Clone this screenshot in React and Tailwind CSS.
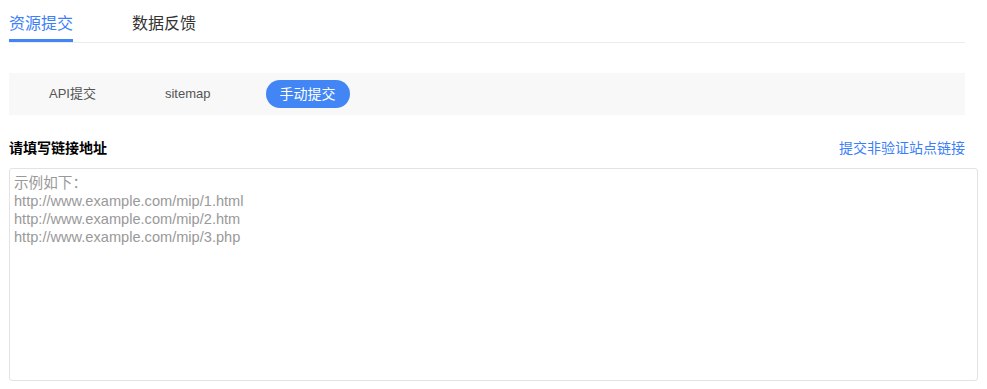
import React, { useState } from 'react';

const FONT = { fontFamily: '"Liberation Sans", "Noto Sans CJK SC", sans-serif' };

const TABS = ['资源提交', '数据反馈'];
const MODES = ['API提交', 'sitemap', '手动提交'];

const PLACEHOLDER = [
  '示例如下：',
  'http://www.example.com/mip/1.html',
  'http://www.example.com/mip/2.htm',
  'http://www.example.com/mip/3.php',
].join('\n');

export default function App() {
  const [tab, setTab] = useState(0);
  const [mode, setMode] = useState(2);

  return (
    <div className="w-[987px] h-[389px] bg-white pl-[9px]" style={FONT}>
      {/* Top tabs */}
      <div className="w-[956px] flex gap-[59px] border-b border-[#ececec]">
        {TABS.map((t, i) => (
          <button
            key={t}
            onClick={() => setTab(i)}
            className={`h-[42px] pt-[8px] text-[16px] leading-[22px] self-start border-b-[3px] ${
              tab === i ? 'text-[#3c7ff7] border-[#4285f4]' : 'text-[#333] border-transparent'
            }`}
          >
            {t}
          </button>
        ))}
      </div>

      {/* Submit mode switch */}
      <div className="mt-[30px] w-[956px] h-[42px] bg-[#f8f8f8] flex items-center pl-[26px] gap-[41px]">
        {MODES.map((m, i) => (
          <button
            key={m}
            onClick={() => setMode(i)}
            className={`h-[28px] px-[14px] rounded-full leading-[28px] ${
              mode === i ? 'bg-[#4285f4] text-white text-[14px]' : 'text-[#555] text-[13px]'
            }`}
          >
            {m}
          </button>
        ))}
      </div>

      {/* Label row */}
      <div className="mt-[24px] w-[956px] flex items-center justify-between h-[18px]">
        <span className="text-[14px] font-bold text-black">请填写链接地址</span>
        <a className="text-[14px] text-[#3c7ff7] cursor-pointer">提交非验证站点链接</a>
      </div>

      <textarea
        className="mt-[11px] block w-[969px] h-[213px] border border-[#e3e3e3] rounded-[3px] pt-[5px] px-[4px] text-[14.6px] leading-[18px] text-[#333] placeholder:text-[#999] resize-none outline-none"
        placeholder={PLACEHOLDER}
        style={FONT}
      />
    </div>
  );
}
